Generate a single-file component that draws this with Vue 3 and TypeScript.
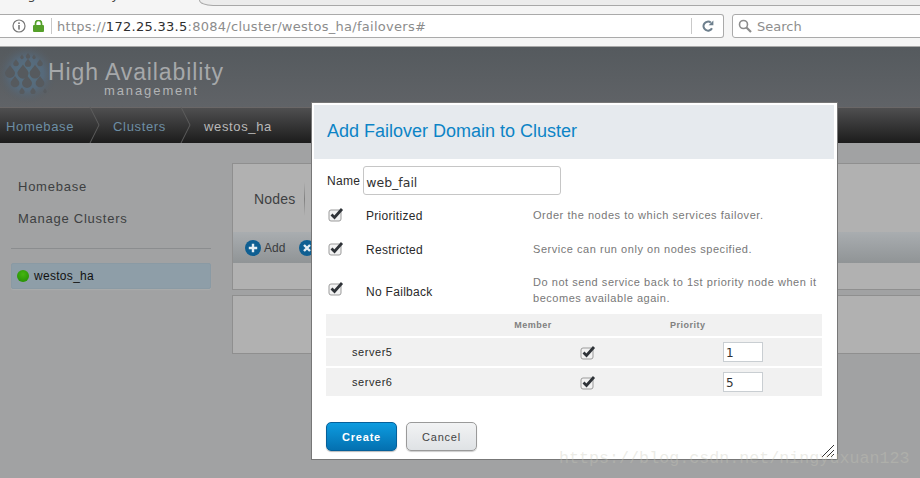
<script setup lang="ts">
interface Option {
  label: string
  desc: string
  tall?: boolean
}

interface Member {
  name: string
  priority: string
}

const options: Option[] = [
  { label: 'Prioritized', desc: 'Order the nodes to which services failover.' },
  { label: 'Restricted', desc: 'Service can run only on nodes specified.' },
  {
    label: 'No Failback',
    desc: 'Do not send service back to 1st priority node when it becomes available again.',
    tall: true,
  },
]

const members: Member[] = [
  { name: 'server5', priority: '1' },
  { name: 'server6', priority: '5' },
]

// x, y, radius of the logo's droplets
const drops = [
  [22, 10, 1.8], [28, 9, 2.2], [34, 10, 1.8],
  [16, 16, 2.8], [28, 16, 3.2], [40, 16, 2.8],
  [10, 25, 5], [23, 25, 5.6], [35, 25, 5.4],
  [15, 35, 4.4], [27, 35, 5], [40, 35, 4.4],
  [22, 44, 2.6], [33, 44, 2.6], [45, 44, 1.8],
]

function dropPath(x: number, y: number, r: number): string {
  const top = y - r * 1.35
  return `M${x} ${top}C${x + r * 0.5} ${y - r * 0.6} ${x + r} ${y - r * 0.2} ${x + r} ${y + r * 0.2}`
    + `A${r} ${r} 0 0 1 ${x - r} ${y + r * 0.2}C${x - r} ${y - r * 0.2} ${x - r * 0.5} ${y - r * 0.6} ${x} ${top}Z`
}
</script>

<template>
  <div class="screen">
    <svg class="defs" width="0" height="0">
      <symbol id="check" viewBox="0 0 16 15">
        <rect x="1" y="3" width="12" height="11" rx="2" fill="#f2f2f2" stroke="#9b9b9b" />
        <path d="M3.5 7.5 L6.5 10.5 L14 2" fill="none" stroke="#2f3338" stroke-width="2.8" />
      </symbol>
    </svg>

    <div class="tabstrip">
      <div class="tab-title">High Availability</div>
      <div class="tab-rest"></div>
    </div>
    <div class="toolbar">
      <div class="urlbar">
        <svg class="info" width="14" height="14" viewBox="0 0 14 14">
          <circle cx="7" cy="7" r="6" fill="none" stroke="#777" stroke-width="1.2" />
          <rect x="6.2" y="6" width="1.6" height="4.6" fill="#777" />
          <rect x="6.2" y="3.4" width="1.6" height="1.6" fill="#777" />
        </svg>
        <svg class="lock" width="11" height="12" viewBox="0 0 11 12">
          <path d="M2.5 5V3.5a3 3 0 0 1 6 0V5" fill="none" stroke="#55a02a" stroke-width="1.7" />
          <rect x="0" y="5" width="11" height="7" rx="1" fill="#55a02a" />
        </svg>
        <span class="sep"></span>
        <span class="url"><span class="dim">https://</span>172.25.33.5<span class="dim">:8084/cluster/westos_ha/failovers#</span></span>
        <span class="sep sep-right"></span>
        <svg class="reload" width="12" height="12" viewBox="0 0 12 12">
          <path d="M10 8.2A4.5 4.5 0 1 1 8.8 2.6" fill="none" stroke="#6d7f8d" stroke-width="2" />
          <path d="M6.6 5.2H11.4V0.6Z" fill="#6d7f8d" />
        </svg>
      </div>
      <div class="searchbar">
        <svg width="14" height="14" viewBox="0 0 14 14">
          <circle cx="5.5" cy="5.5" r="4" fill="none" stroke="#8c8c8c" stroke-width="1.6" />
          <path d="M8.5 8.5L13 13" stroke="#8c8c8c" stroke-width="2.2" />
        </svg>
        <span>Search</span>
      </div>
    </div>

    <header class="brand">
      <svg class="logo" width="60" height="60" viewBox="0 0 60 60">
        <defs>
          <radialGradient id="glow">
            <stop offset="0" stop-color="#567283" />
            <stop offset="0.55" stop-color="#56697a" />
            <stop offset="1" stop-color="#585d62" stop-opacity="0" />
          </radialGradient>
        </defs>
        <circle cx="27" cy="27" r="30" fill="url(#glow)" />
        <path v-for="(d, i) in drops" :key="i" :d="dropPath(d[0], d[1], d[2])" fill="#565a5e" />
      </svg>
      <div class="brand-text">
        <div class="brand-name">High Availability</div>
        <div class="brand-sub">management</div>
      </div>
    </header>

    <nav class="crumbs">
      <a class="crumb crumb-first">Homebase</a>
      <svg class="chevron" width="11" height="36" viewBox="0 0 11 36">
        <path d="M1 0L10 18L1 36" fill="none" stroke="#5e5e5e" />
      </svg>
      <a class="crumb crumb-mid">Clusters</a>
      <svg class="chevron" width="11" height="36" viewBox="0 0 11 36">
        <path d="M1 0L10 18L1 36" fill="none" stroke="#5e5e5e" />
      </svg>
      <span class="crumb crumb-current">westos_ha</span>
    </nav>

    <main class="body">
      <aside class="sidebar">
        <a class="side-link">Homebase</a>
        <a class="side-link">Manage Clusters</a>
        <div class="side-rule"></div>
        <div class="cluster">
          <span class="dot"></span>
          <span>westos_ha</span>
        </div>
      </aside>
      <section class="content">
        <div class="panel">
          <div class="tabs">
            <span class="tab-label">Nodes</span>
            <span class="tab-sep"></span>
          </div>
          <div class="actions">
            <span class="action">
              <svg width="16" height="16" viewBox="0 0 16 16">
                <circle cx="8" cy="8" r="8" fill="#0f5f92" />
                <path d="M8 3.8V12.2M3.8 8H12.2" stroke="#e6eef3" stroke-width="2.4" />
              </svg>
              <span>Add</span>
            </span>
            <span class="action">
              <svg width="16" height="16" viewBox="0 0 16 16">
                <circle cx="8" cy="8" r="8" fill="#0f5f92" />
                <path d="M5 5L11 11M11 5L5 11" stroke="#e6eef3" stroke-width="2.4" />
              </svg>
            </span>
          </div>
          <div class="panel-row"></div>
        </div>
        <div class="panel panel-empty"></div>
      </section>
    </main>

    <div class="dialog">
      <h2 class="dialog-title">Add Failover Domain to Cluster</h2>
      <div class="dialog-body">
        <label class="name-row">
          <span>Name</span>
          <input class="name-input" value="web_fail" />
        </label>
        <div v-for="o in options" :key="o.label" class="option" :class="{ tall: o.tall }">
          <svg class="check" width="16" height="15"><use href="#check" /></svg>
          <span class="option-label">{{ o.label }}</span>
          <span class="option-desc">{{ o.desc }}</span>
        </div>
        <div class="member-head">
          <span class="head-name"></span>
          <span class="head-member">Member</span>
          <span class="head-priority">Priority</span>
        </div>
        <div v-for="m in members" :key="m.name" class="member-row">
          <span class="row-name">{{ m.name }}</span>
          <span class="row-member"><svg width="16" height="15"><use href="#check" /></svg></span>
          <input class="priority" :value="m.priority" />
        </div>
        <div class="buttons">
          <button class="btn btn-create">Create</button>
          <button class="btn btn-cancel">Cancel</button>
        </div>
      </div>
      <svg class="grip" width="13" height="13" viewBox="0 0 13 13">
        <path d="M0 13L12 1M5 13L12 6M9 13L12 10" stroke="#333" />
      </svg>
    </div>

    <div class="watermark">https://blog.csdn.net/ningyuxuan123</div>
  </div>
</template>

<style>
html,
body {
  margin: 0;
  overflow: hidden;
}
</style>

<style scoped>
.screen {
  position: relative;
  width: 920px;
  height: 478px;
  overflow: hidden;
  display: flex;
  flex-direction: column;
  background: #a1a2a3;
  font-family: "Liberation Sans", Arial, sans-serif;
}

.defs {
  position: absolute;
}

.tabstrip {
  display: flex;
  height: 6px;
  flex: none;
  overflow: hidden;
  background: #f5f5f5;
}

.tab-title {
  width: 199px;
  flex: none;
  overflow: hidden;
  white-space: nowrap;
  padding-left: 14px;
  box-sizing: border-box;
  margin-top: -13px;
  height: 16px;
  font: 13px/15px "DejaVu Sans", sans-serif;
  color: #444;
}

.tab-rest {
  flex: 1;
  box-sizing: border-box;
  background: #ececec;
  border-left: 1px solid #a8a8a8;
  border-bottom: 1px solid #a8a8a8;
  border-bottom-left-radius: 14px 6px;
}

.toolbar {
  height: 41px;
  flex: none;
  box-sizing: border-box;
  display: flex;
  align-items: center;
  gap: 8px;
  background: #f5f5f5;
  border-bottom: 1px solid #a9a9a9;
}

.urlbar,
.searchbar {
  height: 24px;
  box-sizing: border-box;
  display: flex;
  align-items: center;
  background: #fff;
  border: 1px solid #aaa;
}

.urlbar {
  width: 725px;
  margin-left: -1px;
  padding-left: 13px;
  border-radius: 0 3px 3px 0;
  border-left: none;
  box-shadow: inset 6px 0 0 -5px #aaa;
}

.info {
  flex: none;
}

.lock {
  flex: none;
  margin-left: 7px;
}

.sep {
  width: 1px;
  height: 16px;
  background: #c9c9c9;
  margin-left: 7px;
}

.url {
  margin-left: 5px;
  font: 13px "DejaVu Sans", sans-serif;
  letter-spacing: 0.28px;
  color: #2e2e2e;
  white-space: nowrap;
  width: 628px;
}

.dim {
  color: #8c8c8c;
}

.sep-right {
  margin-left: 6px;
}

.reload {
  margin-left: 10px;
}

.searchbar {
  flex: 1;
  margin-right: -4px;
  padding-left: 5px;
  gap: 5px;
  border-radius: 3px;
  font: 13px "DejaVu Sans", sans-serif;
  color: #8e8e8e;
}

.brand {
  height: 60px;
  flex: none;
  display: flex;
  background: linear-gradient(#555a5e, #606367);
}

.logo {
  flex: none;
}

.brand-text {
  margin-left: -12px;
  padding-top: 12px;
  color: #a6a8aa;
}

.brand-name {
  font-size: 23px;
  line-height: 27px;
  letter-spacing: 0.9px;
  white-space: nowrap;
}

.brand-sub {
  margin-top: -2px;
  font-size: 13px;
  line-height: 13px;
  letter-spacing: 1.9px;
  padding-left: 56px;
  color: #b2b4b5;
}

.crumbs {
  height: 36px;
  flex: none;
  display: flex;
  align-items: center;
  box-sizing: border-box;
  border-top: 1px solid #6a6767;
  background: linear-gradient(#4f4f50, #1c1c1c);
  font-size: 13px;
  letter-spacing: 0.65px;
}

.chevron {
  flex: none;
  margin-top: -1px;
}

.crumb {
  white-space: nowrap;
  padding-top: 1px;
  color: #6d8ea4;
}

.crumb-first {
  padding-left: 6px;
  padding-right: 15px;
}

.crumb-mid {
  padding-left: 13px;
  padding-right: 14px;
}

.crumb-current {
  padding-left: 13px;
  color: #b9b9b9;
}

.body {
  flex: 1;
  display: flex;
  min-height: 0;
}

.sidebar {
  width: 232px;
  flex: none;
  box-sizing: border-box;
  padding: 36px 21px 0 11px;
  display: flex;
  flex-direction: column;
}

.side-link {
  height: 32px;
  padding-left: 7px;
  font-size: 13px;
  line-height: 16px;
  letter-spacing: 0.75px;
  color: #3d3f41;
}

.side-rule {
  height: 1px;
  margin-top: 5px;
  background: #8b8d8f;
}

.cluster {
  height: 26px;
  margin-top: 14px;
  box-sizing: border-box;
  display: flex;
  align-items: center;
  gap: 5px;
  padding-left: 5px;
  background: #8e9ea8;
  border: 1px solid #8a9aa4;
  border-radius: 2px;
  box-shadow: 0 1px 1px #a9abab;
  font-size: 12px;
  letter-spacing: 0.3px;
  color: #111;
}

.dot {
  width: 12px;
  height: 12px;
  border-radius: 50%;
  background: radial-gradient(circle at 50% 35%, #45b511, #1f8a02);
}

.content {
  flex: 1;
  padding-top: 20px;
  display: flex;
  flex-direction: column;
  gap: 5px;
}

.panel {
  box-sizing: border-box;
  height: 127px;
  background: #b1b1b1;
  border: 1px solid #8f8f8f;
  border-right: none;
}

.panel-empty {
  height: 59px;
}

.tabs {
  height: 68px;
  box-sizing: border-box;
  padding: 2px 0 0 21px;
  display: flex;
  align-items: center;
  color: #3e4042;
  font-size: 14px;
  letter-spacing: 0.2px;
}

.tab-sep {
  width: 1px;
  height: 34px;
  margin-left: 9px;
  background: linear-gradient(#b1b1b1, #808080, #b1b1b1);
}

.actions {
  height: 31px;
  display: flex;
  align-items: center;
  gap: 14px;
  padding-left: 12px;
  background: linear-gradient(#a9adb0, #909496);
}

.action {
  display: flex;
  align-items: center;
  gap: 3px;
  font-size: 12px;
  color: #3a3c3e;
}

.panel-row {
  height: 26px;
}

.dialog {
  position: absolute;
  left: 311px;
  top: 102px;
  width: 527px;
  height: 358px;
  box-sizing: border-box;
  padding: 2px 3px 0 2px;
  background: #fff;
  border: 1px solid #777;
}

.dialog-title {
  margin: 0;
  height: 54px;
  padding-left: 13px;
  background: #e6eaee;
  font-size: 18px;
  font-weight: 400;
  line-height: 53px;
  color: #0c84c6;
}

.dialog-body {
  padding: 7px 12px 0 12px;
  font-size: 12px;
  color: #2a2a2a;
}

.name-row {
  display: flex;
  align-items: center;
  gap: 4px;
  height: 29px;
  padding-left: 1px;
  font-size: 12px;
  letter-spacing: 0.3px;
}

.name-input {
  width: 198px;
  height: 29px;
  margin-left: -1px;
  box-sizing: border-box;
  padding: 4px 2px 0;
  border: 1px solid #c6c6c6;
  border-radius: 3px;
  outline: none;
  font: 12.5px "DejaVu Sans", sans-serif;
  color: #333;
}

.option {
  display: flex;
  align-items: center;
  height: 34px;
  padding-left: 2px;
}

.option:first-of-type {
  margin-top: 4px;
}

.option.tall {
  height: 45px;
}

.check {
  flex: none;
  margin-top: -3px;
}

.option-label {
  flex: none;
  width: 167px;
  padding-left: 22px;
  font-size: 12px;
  letter-spacing: 0.3px;
}

.tall .option-label {
  margin-top: 5px;
}

.option-desc {
  width: 290px;
  margin-top: -3px;
  font-size: 11px;
  line-height: 16px;
  letter-spacing: 0.54px;
  color: #787878;
}

.tall .option-desc {
  margin-top: 1px;
}

.member-head,
.member-row {
  display: flex;
  align-items: center;
  width: 496px;
  background: #f1f1f1;
}

.member-head {
  height: 22px;
  margin-top: 2px;
  font-size: 9px;
  font-weight: 700;
  letter-spacing: 0.5px;
  color: #808080;
}

.head-name {
  width: 169px;
  flex: none;
}

.head-member {
  width: 76px;
  flex: none;
  text-align: center;
}

.head-priority {
  padding-left: 99px;
}

.member-row {
  height: 28px;
  margin-top: 2px;
  font-size: 11px;
  letter-spacing: 0.55px;
}

.row-name {
  width: 254px;
  flex: none;
  box-sizing: border-box;
  padding-left: 26px;
}

.row-member {
  width: 143px;
  flex: none;
  display: flex;
}

.priority {
  display: block;
  width: 40px;
  height: 20px;
  box-sizing: border-box;
  padding: 2px 0 0 2px;
  border: 1px solid #c9ced2;
  outline: none;
  font: 12px "DejaVu Sans", sans-serif;
  color: #333;
}

.buttons {
  display: flex;
  gap: 9px;
  margin-top: 26px;
}

.btn {
  width: 71px;
  height: 29px;
  padding: 0;
  border-radius: 5px;
  font-family: "Liberation Sans", Arial, sans-serif;
  font-size: 11px;
  letter-spacing: 0.8px;
}

.btn-create {
  border: 1px solid #05609a;
  background: linear-gradient(#0d9ce0, #0470b0);
  color: #fff;
  font-weight: 700;
  box-shadow: 0 1px 1px #bbb;
}

.btn-cancel {
  border: 1px solid #9a9a9a;
  background: linear-gradient(#f2f3f4, #dfe2e5);
  color: #444;
  box-shadow: 0 1px 1px #ccc;
}

.grip {
  position: absolute;
  right: 2px;
  bottom: 2px;
}

.watermark {
  position: absolute;
  left: 559px;
  top: 449px;
  font: 16.7px/19px "Liberation Mono", monospace;
  color: rgba(200, 200, 185, 0.35);
  white-space: nowrap;
  pointer-events: none;
}
</style>
